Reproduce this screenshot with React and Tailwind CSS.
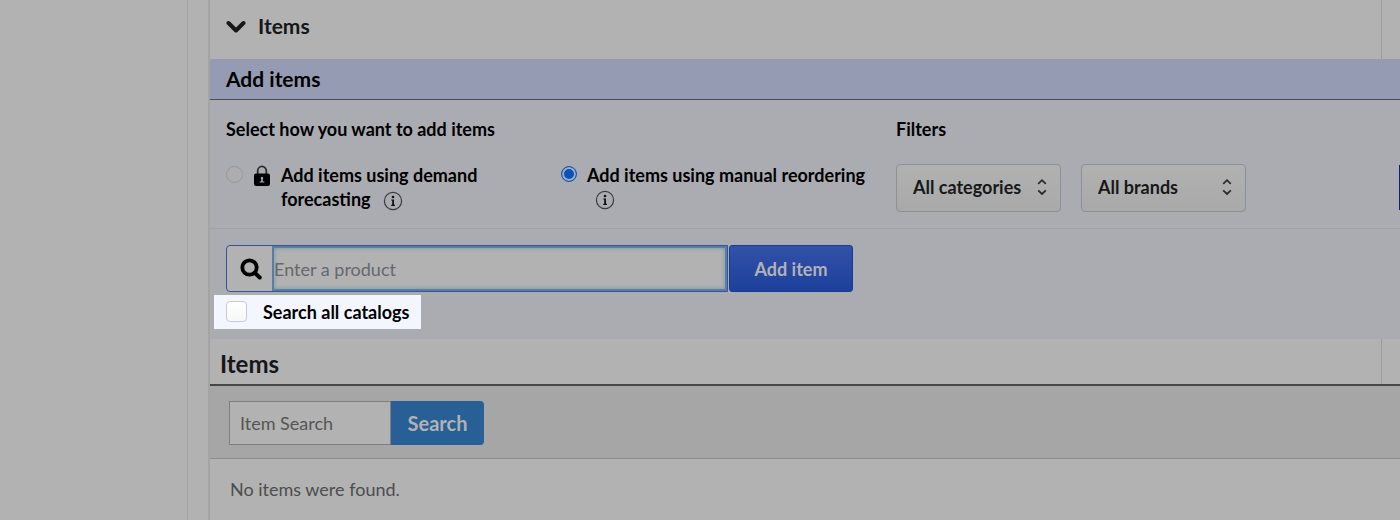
function ChevronDown() {
  return (
    <svg width="20" height="14" viewBox="0 0 20 14" fill="none" stroke="#161719" strokeWidth="4" aria-hidden="true">
      <path d="M2.500 3 L10 10.500 L17.500 3" strokeLinecap="round" strokeLinejoin="round" />
    </svg>
  );
}

function Lock() {
  return (
    <svg width="18" height="22" viewBox="0 0 18 22" aria-hidden="true" className="shrink-0">
      <path d="M4.700 9 V6 a4.300 4.600 0 0 1 8.600 0 V9" fill="none" stroke="#2b2c2f" strokeWidth="1.800" />
      <rect x="1" y="8.500" width="16" height="12.500" rx="2" fill="#000" />
      <path d="M9 11.800 a1.300 1.300 0 0 1 .8 2.300 V16.500 H11.300 V17.500 H6.700 V16.500 H8.200 V14.100 A1.300 1.300 0 0 1 9 11.800 Z" fill="#abacb2" />
    </svg>
  );
}

function Info() {
  return (
    <svg width="20" height="20" viewBox="0 0 20 20" aria-hidden="true" className="inline-block align-middle">
      <circle cx="10" cy="10" r="8.600" fill="none" stroke="#3a3b3f" strokeWidth="1.200" />
      <circle cx="10" cy="6" r="1.300" fill="#111" />
      <path d="M8.300 8.500 H11 V13.800 H12 V14.900 H8.200 V13.800 H9.200 V9.500 H8.300 Z" fill="#111" />
    </svg>
  );
}

function Sorter() {
  return (
    <svg width="10" height="18" viewBox="0 0 10 18" fill="none" stroke="#2a2b2d" strokeWidth="1.800" aria-hidden="true" className="pointer-events-none absolute right-3.5 top-3.5">
      <path d="M1.200 5.800 L5 2.200 L8.800 5.800 M1.200 12.300 L5 15.900 L8.800 12.300" />
    </svg>
  );
}

function Magnifier() {
  return (
    <svg width="22" height="22" viewBox="0 0 22 22" fill="none" stroke="#000" aria-hidden="true">
      <circle cx="9.500" cy="9.500" r="7.200" strokeWidth="3.800" />
      <path d="M15 15 L19.700 19.500" strokeWidth="4" strokeLinecap="round" />
    </svg>
  );
}

function Filter({ id, label }) {
  return (
    <div className="relative">
      <select
        id={id}
        aria-label={label}
        className="block h-12 w-[165px] appearance-none rounded border border-[#8c9099] bg-linear-to-b from-[#b1b1b1] to-[#a9a9a9] pb-0.5 pl-4 text-lg font-bold text-[#17181a]"
      >
        <option>{label}</option>
      </select>
      <Sorter />
    </div>
  );
}

export default function App() {
  return (
    <div className="flex min-h-screen overflow-hidden bg-[#b2b2b2] font-['Lato',sans-serif] text-lg text-black">
      <aside className="w-[188px] shrink-0 border-r border-[#a3a3a3]" />
      <main className="ml-5 min-w-0 flex-1 border-l-2 border-[#a4a4a4]">
        <header className="mr-[18px] flex h-[59px] items-center gap-3 border-r border-[#9c9c9c] pb-1.5 pl-4">
          <ChevronDown />
          <h2 className="text-[21px] font-bold text-[#161719]">Items</h2>
        </header>

        <section className="bg-[#abacb2]">
          <h3 className="flex h-[41px] items-center border-b border-[#4a4c55] bg-[#959bb2] pl-4 text-[21px] font-bold">Add items</h3>

          <div className="flex h-[129px] items-start border-b border-[#a0a1a6] pt-4 pl-4">
            <fieldset className="w-[670px] shrink-0 font-bold">
              <legend className="leading-[26px]">Select how you want to add items</legend>
              <div className="flex pt-[21px]">
                <div className="flex w-[335px] items-start">
                  <input id="forecast" type="radio" name="method" disabled className="mt-[3px] size-[17px] shrink-0 appearance-none rounded-full border border-[#96979a] bg-[#adadb0]" />
                  <span className="ml-2.5 mt-0.5"><Lock /></span>
                  <label htmlFor="forecast" className="ml-2.5 w-[220px] leading-6">
                    Add items using demand forecasting <span className="ml-2"><Info /></span>
                  </label>
                </div>
                <div className="flex flex-1 items-start">
                  <input id="manual" type="radio" name="method" defaultChecked className="mt-[3px] size-4 shrink-0 appearance-none rounded-full border border-[#1559bd] bg-[#0753bd] shadow-[inset_0_0_0_2px_#a5abb5]" />
                  <label htmlFor="manual" className="ml-2.5 leading-6">
                    <span className="block whitespace-nowrap">Add items using manual reordering</span>
                    <span className="ml-2 block leading-[22px]"><Info /></span>
                  </label>
                </div>
              </div>
            </fieldset>
            <div>
              <h4 className="font-bold leading-[26px]">Filters</h4>
              <div className="flex gap-5 pt-[22px]">
                <Filter id="categories" label="All categories" />
                <Filter id="brands" label="All brands" />
              </div>
            </div>
            <button type="button" aria-label="Apply filters" className="ml-auto mt-[49px] h-[45px] w-px shrink-0 bg-[#08227e]" />
          </div>

          <form className="h-[110px] pt-4 pl-4">
            <div className="flex h-[47px]">
              <div className="flex w-[502px] rounded-l border border-[#3d4fa0] bg-[#b2b2b2]">
                <label htmlFor="product" aria-label="Product" className="flex w-[45px] items-center justify-end pr-2.5">
                  <Magnifier />
                </label>
                <input
                  id="product"
                  type="text"
                  placeholder="Enter a product"
                  className="min-w-0 flex-1 border-2 border-r-2 border-[#587fa0] bg-[#b2b2b2] pr-1 shadow-[inset_0_0_4px_#6d93a8] outline-none placeholder:text-[#66686d]"
                />
              </div>
              <button type="button" className="ml-px w-[124px] rounded-[3px] border border-[#173c97] bg-linear-to-b from-[#3351a8] to-[#1c409c] font-bold text-[#b2b2b2]">
                Add item
              </button>
            </div>
            <label className="mt-[3px] -ml-3 flex h-[34px] w-[207px] items-center gap-4 bg-[#f4f6ff] pl-3 font-bold">
              <input type="checkbox" className="mb-0.5 size-[21px] shrink-0 appearance-none rounded border border-[#c8cad2] bg-linear-to-b from-white to-[#f6f7f7]" />
              Search all catalogs
            </label>
          </form>
        </section>

        <div className="mr-[18px] flex h-[45px] items-center border-r border-[#9c9c9c] pt-1 pl-2.5">
          <h2 className="text-2xl font-bold text-[#161719]">Items</h2>
        </div>
        <div className="flex h-[75px] items-center border-t-2 border-b border-t-[#464646] border-b-[#8f8f8f] bg-[#a6a6a6] pt-0.5 pl-[19px]">
          <form className="flex h-11">
            <input
              type="text"
              aria-label="Item Search"
              placeholder="Item Search"
              className="w-[162px] border border-[#7e7e7e] bg-[#b2b2b2] pl-2.5 placeholder:text-[#555]"
            />
            <button type="button" className="w-[93px] rounded-r bg-[#285f97] text-xl font-bold text-[#b2b2b2]">Search</button>
          </form>
        </div>
        <p className="pt-4 pl-5 text-[#4d4d4d]">No items were found.</p>
      </main>
    </div>
  );
}
